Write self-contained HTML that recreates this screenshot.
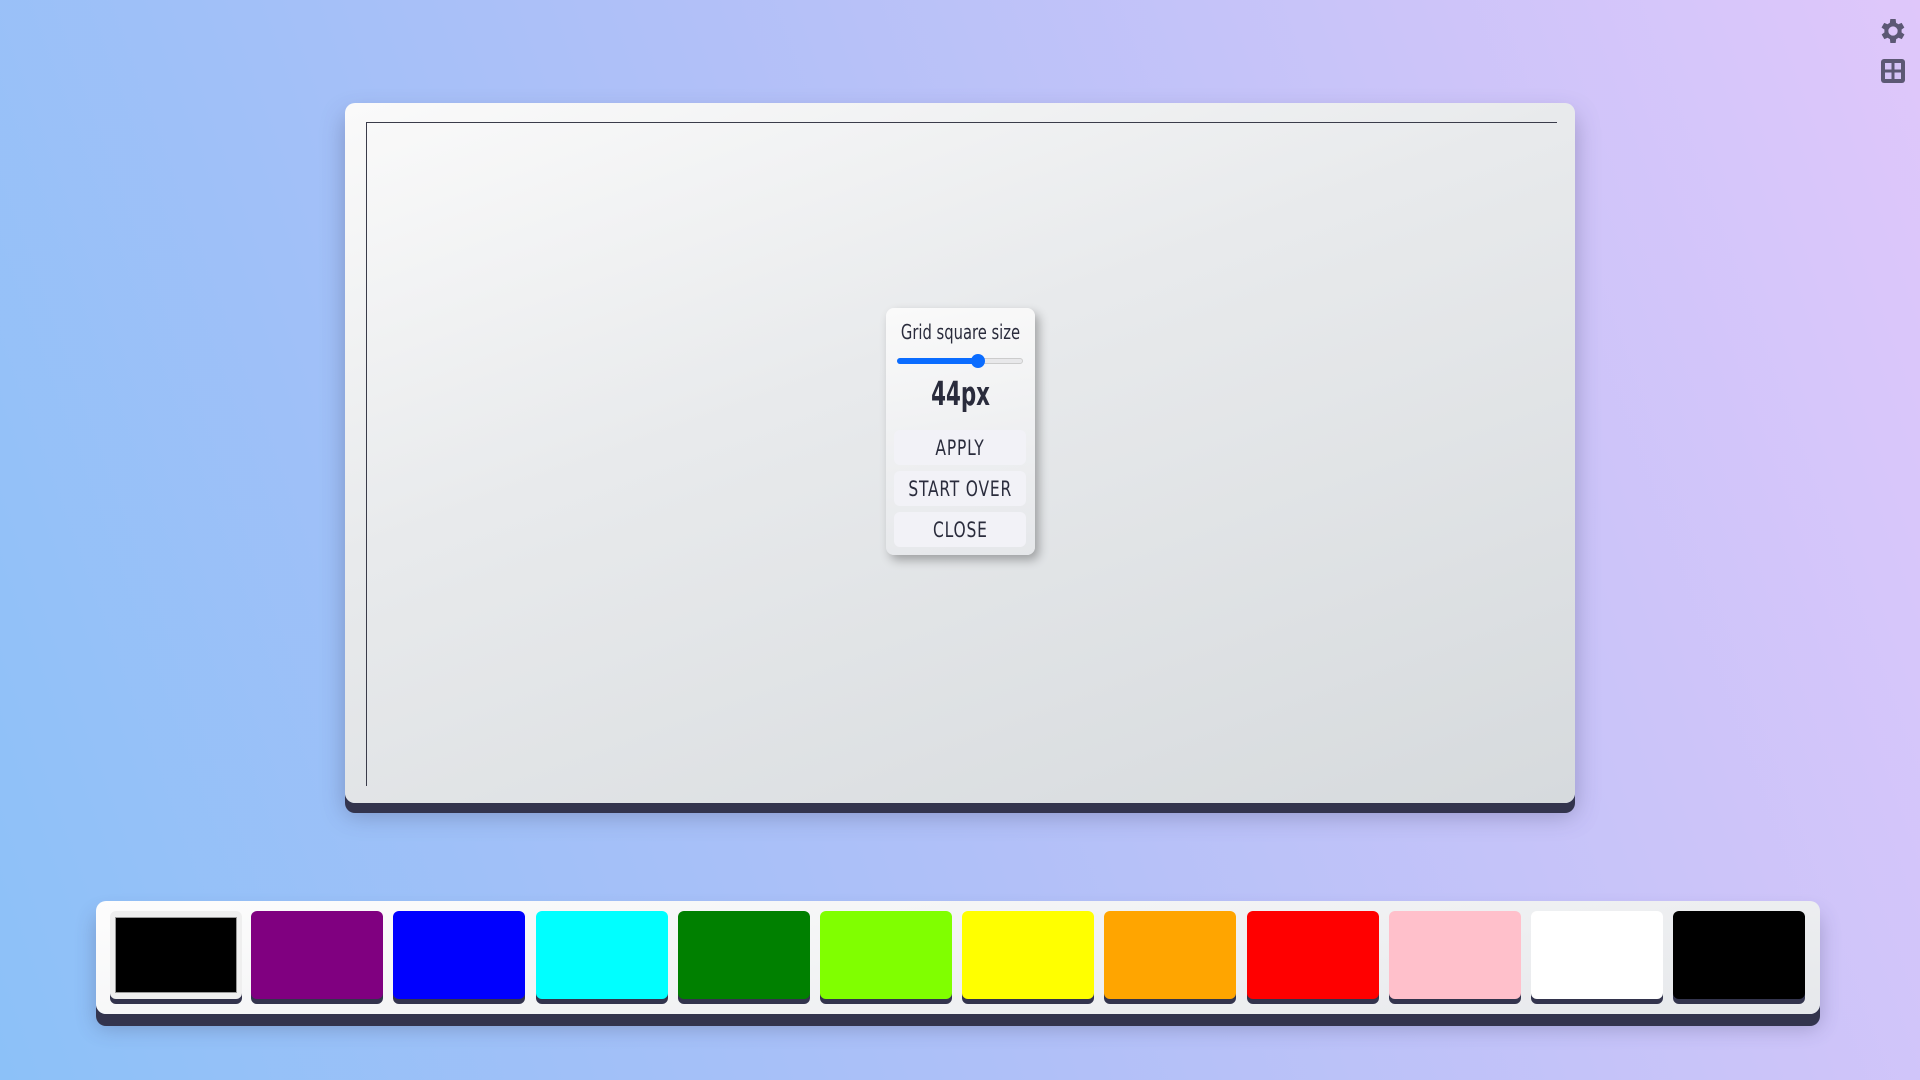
<!DOCTYPE html>
<html><head><meta charset="utf-8"><style>
html,body{margin:0;padding:0;width:1920px;height:1080px;overflow:hidden}
body{background:linear-gradient(70deg,#8cc1f8 0%,#b0c0f8 45%,#dfc7fa 100%);font-family:"Liberation Sans Narrow","DejaVu Sans Condensed","Liberation Sans",sans-serif;position:relative}
.canvas{position:absolute;left:345px;top:103px;width:1230px;height:700px;border-radius:10px;background:linear-gradient(160deg,#fafafa 0%,#e8eaec 40%,#d6dadd 100%);box-shadow:0 10px 0 #33344d,0 12px 24px rgba(60,60,100,.35)}
.inner{position:absolute;left:21px;top:19px;width:1190px;height:663px;border-top:1.5px solid #3a3c4a;border-left:1.5px solid #3a3c4a}
.dlg{position:absolute;left:886px;top:308px;width:149px;height:247px;border-radius:8px;background:linear-gradient(170deg,#fafafa,#e5e7ea);box-shadow:4px 5px 10px rgba(0,0,0,.3);color:#2a2c3c;text-align:center}
.t{position:absolute;top:12px;left:0;right:0;font-size:20px;transform:scaleX(.82)}
.track{position:absolute;left:11px;top:50px;width:126px;height:6px;border-radius:4px;background:#e8e8ea;border:1px solid #ccc;box-sizing:border-box}
.fill{position:absolute;left:11px;top:50px;width:84px;height:6px;border-radius:4px;background:#0a6cff}
.thumb{position:absolute;left:85px;top:46px;width:14px;height:14px;border-radius:50%;background:#0a6cff}
.v{position:absolute;top:66px;left:0;right:0;font-size:33px;font-weight:bold;transform:scaleX(.72)}
.b{position:absolute;left:8px;width:132px;height:35px;border-radius:6px;background:#f2f2f7;font-size:21px;line-height:36px;letter-spacing:1px}
.b span{display:inline-block;transform:scaleX(.82)}
.bar{position:absolute;left:96px;top:901px;width:1724px;height:113px;border-radius:10px;background:linear-gradient(170deg,#fdfdfd,#e6e8eb);box-shadow:0 12px 0 #33344d,0 14px 20px rgba(60,60,100,.3)}
.sw{position:absolute;top:10px;width:132px;height:88px;border-radius:6px;box-shadow:0 5px 0 #33344d}
</style></head><body>
<svg style="position:absolute;left:1877px;top:15px" width="32" height="32" viewBox="0 0 24 24"><path fill="#5c5874" d="M19.4 13a7.5 7.5 0 0 0 0-2l2.1-1.6-2-3.5-2.5 1a7.5 7.5 0 0 0-1.7-1L15 3h-4l-.4 2.9a7.5 7.5 0 0 0-1.7 1l-2.5-1-2 3.5L6.6 11a7.5 7.5 0 0 0 0 2l-2.1 1.6 2 3.5 2.5-1a7.5 7.5 0 0 0 1.7 1L11 21h4l.4-2.9a7.5 7.5 0 0 0 1.7-1l2.5 1 2-3.5zM13 15.5a3.5 3.5 0 1 1 0-7 3.5 3.5 0 0 1 0 7z" transform="translate(-1 0)"/></svg>
<svg style="position:absolute;left:1879px;top:57px" width="28" height="28" viewBox="0 0 28 28"><rect x="2" y="2" width="24" height="24" rx="3" fill="#5c5874"/><rect x="6" y="6" width="6.5" height="6.5" fill="#d6c4f8"/><rect x="15.5" y="6" width="6.5" height="6.5" fill="#d6c4f8"/><rect x="6" y="15.5" width="6.5" height="6.5" fill="#d6c4f8"/><rect x="15.5" y="15.5" width="6.5" height="6.5" fill="#d6c4f8"/></svg>
<div class="canvas"><div class="inner"></div></div>
<div class="dlg">
<div class="t">Grid square size</div>
<div class="track"></div><div class="fill"></div><div class="thumb"></div>
<div class="v">44px</div>
<div class="b" style="top:122px"><span>APPLY</span></div>
<div class="b" style="top:163px"><span>START OVER</span></div>
<div class="b" style="top:204px"><span>CLOSE</span></div>
</div>
<div class="bar">
<div class="sw" style="left:14px;background:#efefef"><div style="position:absolute;left:5px;top:6px;right:5px;bottom:6px;background:#000;border:1px solid #999"></div></div>
<div class="sw" style="left:155px;background:#800080"></div>
<div class="sw" style="left:297px;background:#0000ff"></div>
<div class="sw" style="left:440px;background:#00ffff"></div>
<div class="sw" style="left:582px;background:#008000"></div>
<div class="sw" style="left:724px;background:#80ff00"></div>
<div class="sw" style="left:866px;background:#ffff00"></div>
<div class="sw" style="left:1008px;background:#ffa500"></div>
<div class="sw" style="left:1151px;background:#ff0000"></div>
<div class="sw" style="left:1293px;background:#ffc0cb"></div>
<div class="sw" style="left:1435px;background:#ffffff"></div>
<div class="sw" style="left:1577px;background:#000000"></div>
</div>
</body></html>
